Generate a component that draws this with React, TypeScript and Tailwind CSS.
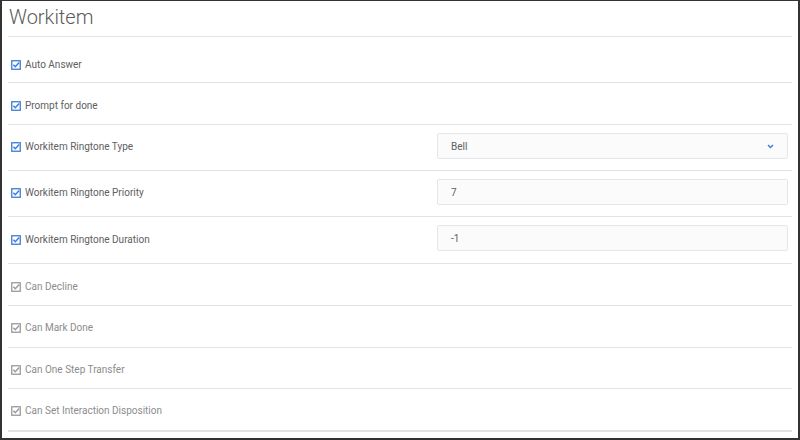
import React from 'react';

type Row = {
  label: string;
  enabled: boolean;
  h: string;
  top: string;
  field?: { value: string; select?: boolean };
};

const rows: Row[] = [
  { label: 'Auto Answer', enabled: true, h: 'h-[46px]', top: 'pt-[21px]' },
  { label: 'Prompt for done', enabled: true, h: 'h-[42px]', top: 'pt-[16px]' },
  { label: 'Workitem Ringtone Type', enabled: true, h: 'h-[46px]', top: 'pt-[15px]', field: { value: 'Bell', select: true } },
  { label: 'Workitem Ringtone Priority', enabled: true, h: 'h-[46px]', top: 'pt-[15px]', field: { value: '7' } },
  { label: 'Workitem Ringtone Duration', enabled: true, h: 'h-[47px]', top: 'pt-[16px]', field: { value: '-1' } },
  { label: 'Can Decline', enabled: false, h: 'h-[42px]', top: 'pt-[16px]' },
  { label: 'Can Mark Done', enabled: false, h: 'h-[42px]', top: 'pt-[15px]' },
  { label: 'Can One Step Transfer', enabled: false, h: 'h-[41px]', top: 'pt-[15px]' },
  { label: 'Can Set Interaction Disposition', enabled: false, h: 'h-[43px] border-b-2', top: 'pt-[15px]' },
];

function CheckIcon({ enabled }: { enabled: boolean }) {
  const c = enabled ? '#3b7dd8' : '#9a9a9a';
  return (
    <svg width="10" height="10" viewBox="0 0 10 10" className="shrink-0">
      <rect x="0.75" y="0.75" width="8.5" height="8.5" fill="none" stroke={c} strokeWidth="1.3" />
      <path d="M2.4 4.8 L4.3 6.7 L8.2 2.6" fill="none" stroke={c} strokeWidth="1.5" />
    </svg>
  );
}

export default function App() {
  return (
    <div
      className="w-[800px] h-[440px] bg-white border-t border-l-2 border-r-2 border-b-2 border-[#333] px-[6px]"
      style={{ fontFamily: 'Roboto, "Liberation Sans", sans-serif' }}
    >
      <div className="h-[36px] border-b border-[#e2e2e2] flex items-start">
        <h1 className="text-[20px] leading-[28px] font-light text-[#5a5a5a] pt-[2px] pl-[1px]">Workitem</h1>
      </div>
      {rows.map((r) => (
        <div key={r.label} className={`${r.h} border-b border-[#e2e2e2] flex items-start pl-[3px] pr-[4px]`}>
          <div className={`flex items-center gap-[4px] flex-1 ${r.top}`}>
            <CheckIcon enabled={r.enabled} />
            <span className={`text-[10px] leading-[14px] ${r.enabled ? 'text-[#606060]' : 'text-[#8c8c8c]'}`}>{r.label}</span>
          </div>
          {r.field && (
            <div className="mt-[8px] w-[351px] h-[26px] border border-[#e3e6ea] bg-[#fbfbfb] rounded-[2px] flex items-center justify-between px-[13px] text-[10px] text-[#606060]">
              <span>{r.field.value}</span>
              {r.field.select && (
                <svg width="7" height="5" viewBox="0 0 7 5">
                  <path d="M1 1 L3.5 3.5 L6 1" fill="none" stroke="#3b7dd8" strokeWidth="1.4" />
                </svg>
              )}
            </div>
          )}
        </div>
      ))}
    </div>
  );
}
